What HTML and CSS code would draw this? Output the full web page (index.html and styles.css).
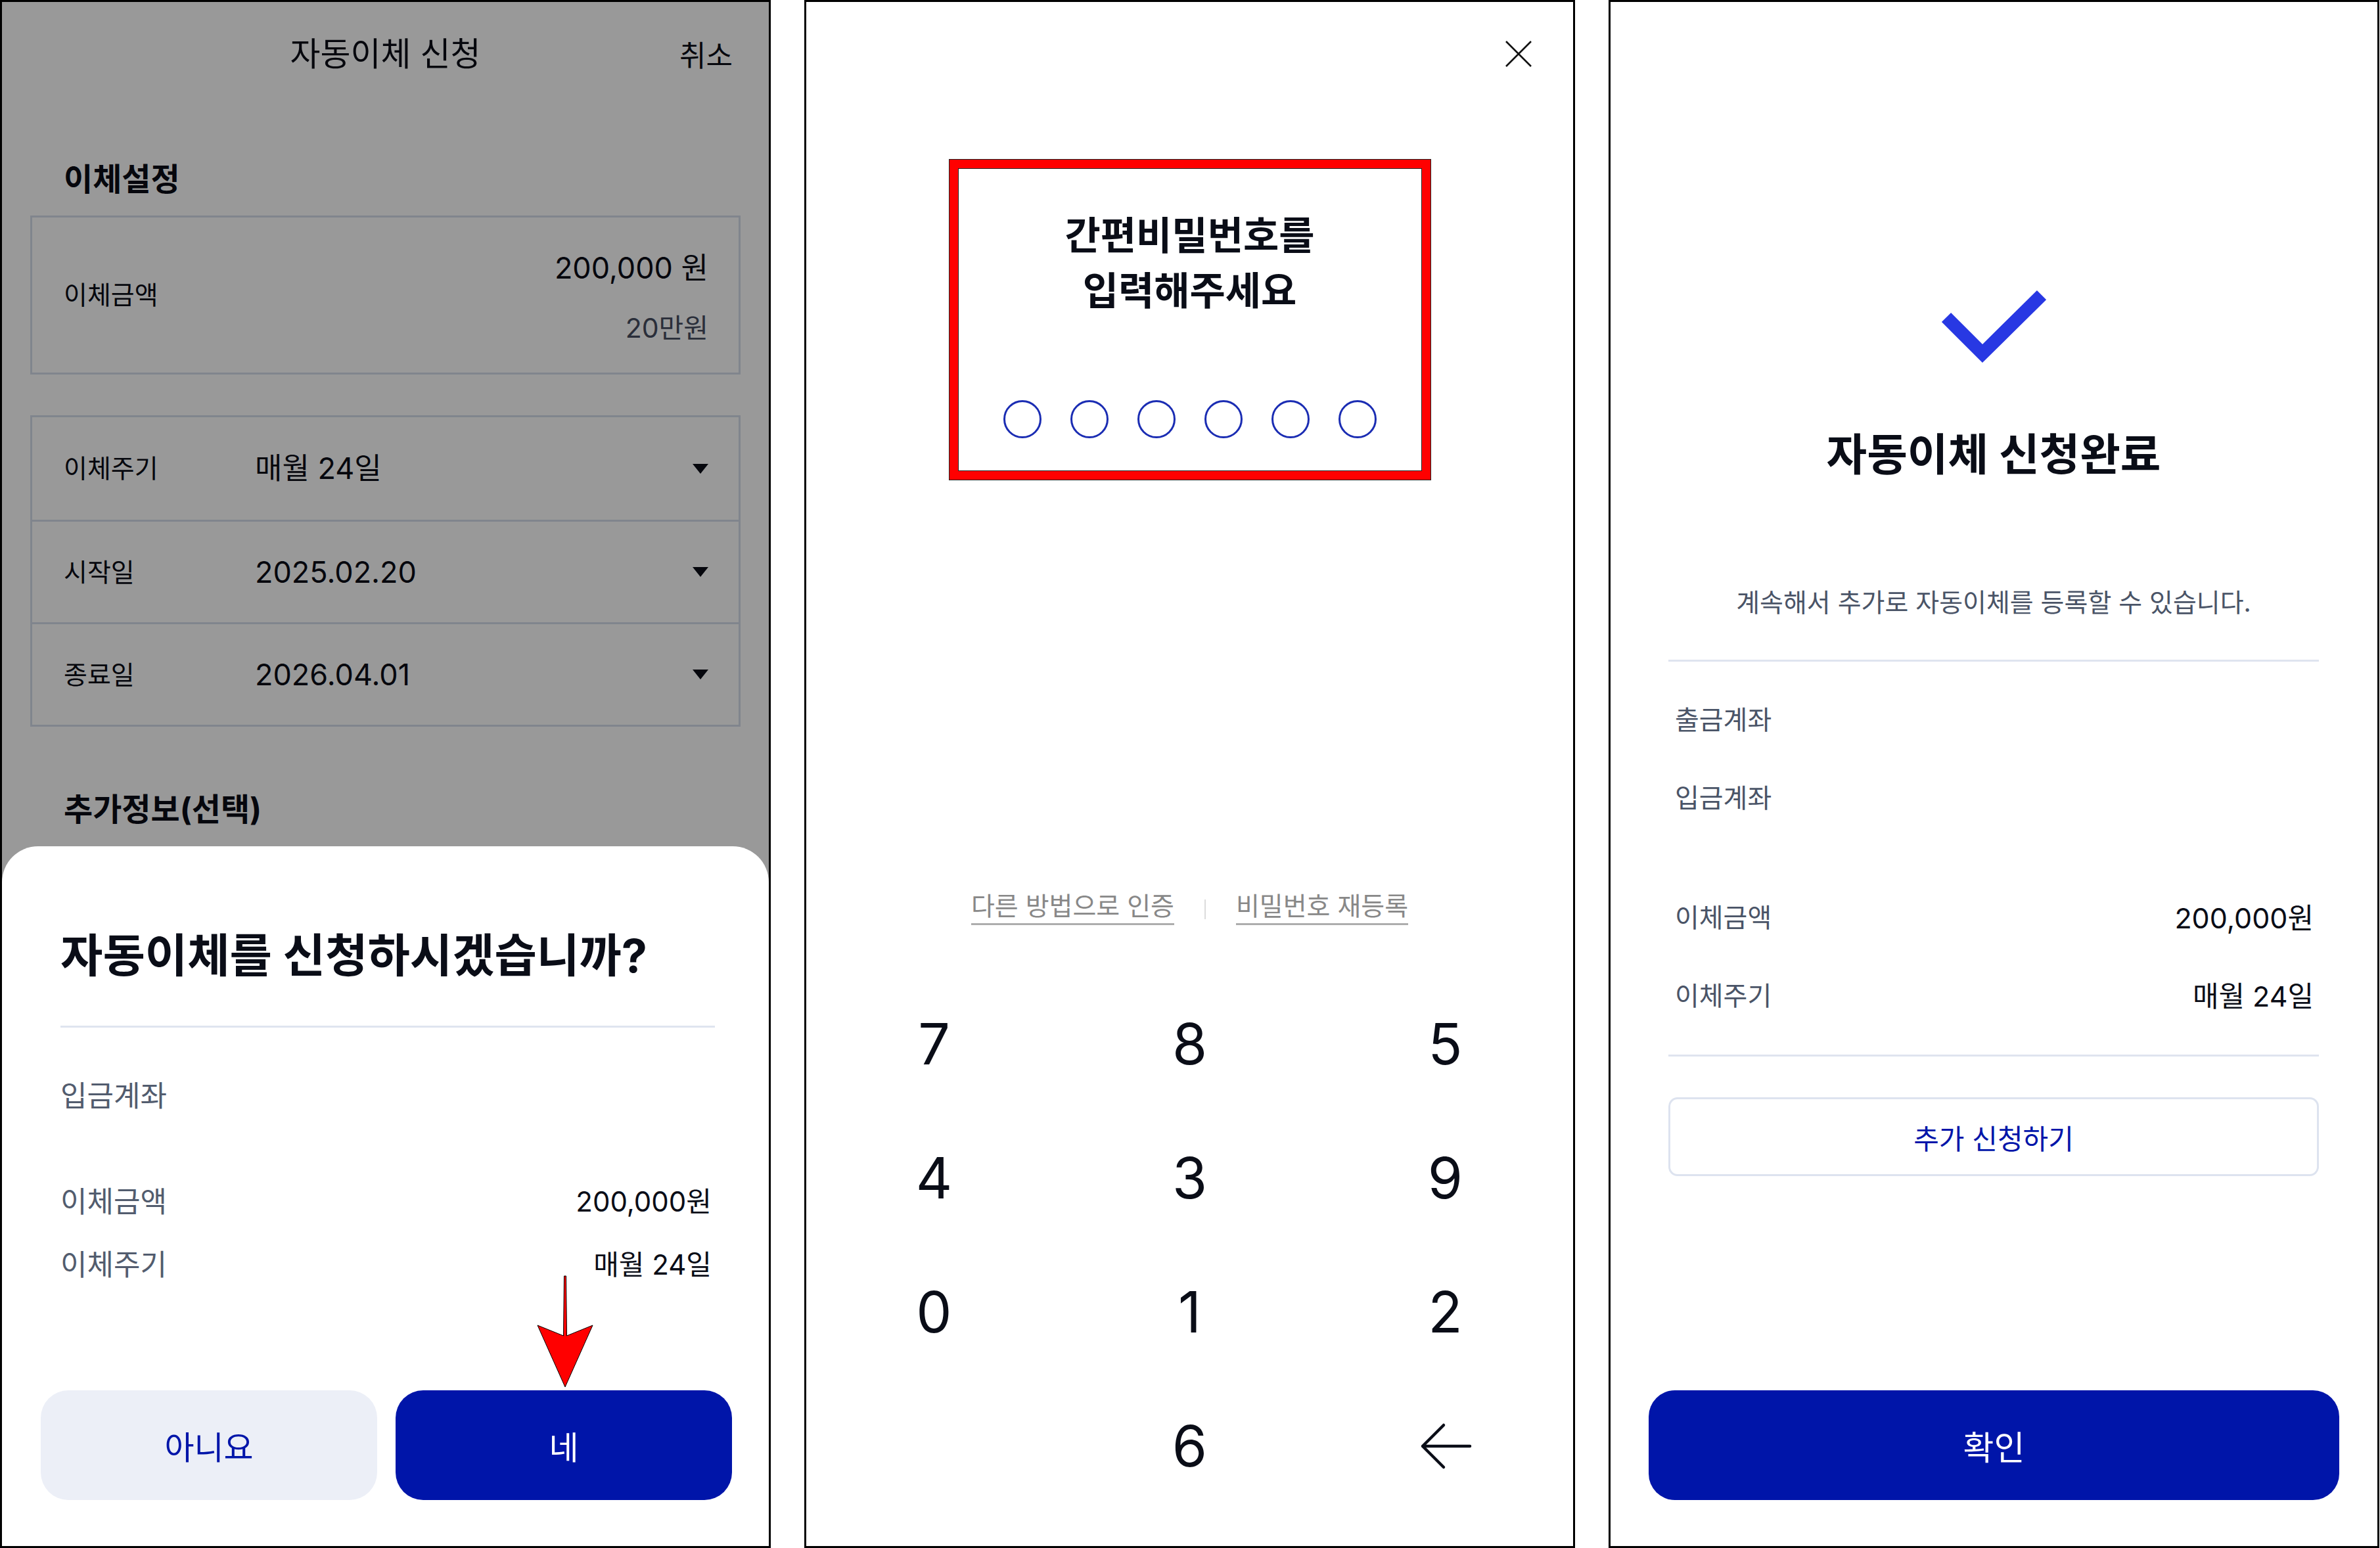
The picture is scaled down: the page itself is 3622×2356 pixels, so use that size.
FILE: index.html
```html
<!DOCTYPE html>
<html lang="ko">
<head>
    <meta charset="UTF-8">
    <meta name="viewport" content="width=device-width, initial-scale=1.0">
    <title>자동이체 신청</title>
    <link rel="stylesheet" href="styles.css">
</head>
<body>
<div class="screens">

    <!-- 1. 신청 화면 + 확인 시트 -->
    <section class="phone">
        <header class="topbar">
            <span></span>
            <h1 class="topbar-title">자동이체 신청</h1>
            <a class="topbar-cancel">취소</a>
        </header>

        <h2 class="section-title">이체설정</h2>
        <div class="field-box amount-box">
            <span class="field-label">이체금액</span>
            <div class="amount">
                <span class="amount-value">200,000 원</span>
                <span class="amount-hint">20만원</span>
            </div>
        </div>

        <div class="field-box select-box">
            <div class="select-row">
                <span class="field-label">이체주기</span>
                <span class="select-value">매월 24일</span>
                <i class="caret"></i>
            </div>
            <div class="select-row">
                <span class="field-label">시작일</span>
                <span class="select-value">2025.02.20</span>
                <i class="caret"></i>
            </div>
            <div class="select-row">
                <span class="field-label">종료일</span>
                <span class="select-value">2026.04.01</span>
                <i class="caret"></i>
            </div>
        </div>

        <h2 class="section-title extra">추가정보(선택)</h2>

        <div class="dim"></div>
        <div class="sheet">
            <h3 class="sheet-title">자동이체를 신청하시겠습니까?</h3>
            <div class="divider"></div>
            <div class="summary">
                <div class="summary-row account"><span class="summary-label">입금계좌</span><span></span></div>
                <div class="summary-row"><span class="summary-label">이체금액</span><span>200,000원</span></div>
                <div class="summary-row"><span class="summary-label">이체주기</span><span>매월 24일</span></div>
            </div>
            <div class="sheet-actions">
                <button class="btn btn-light">아니요</button>
                <button class="btn btn-primary">네</button>
            </div>
        </div>

        <svg class="pointer" width="100" height="185" viewBox="0 0 100 185">
            <path d="M48.5 7 L51.5 7 L52.5 98 L92 82 L50 176 L8 82 L47.5 98 Z" fill="#ff0000" stroke="#000" stroke-width="1"/>
        </svg>
    </section>

    <!-- 2. 간편비밀번호 입력 -->
    <section class="phone">
        <header class="pin-top">
            <svg class="close" width="42" height="42" viewBox="0 0 42 42">
                <path d="M2 2 L40 40 M40 2 L2 40" stroke="#111" stroke-width="2.6" fill="none"/>
            </svg>
        </header>

        <div class="pin-box">
            <h2 class="pin-title">간편비밀번호를<br>입력해주세요</h2>
            <div class="pin-dots">
                <span class="dot"></span>
                <span class="dot"></span>
                <span class="dot"></span>
                <span class="dot"></span>
                <span class="dot"></span>
                <span class="dot"></span>
            </div>
        </div>

        <div class="pin-links">
            <a class="pin-link">다른 방법으로 인증</a>
            <span class="pin-sep"></span>
            <a class="pin-link">비밀번호 재등록</a>
        </div>

        <div class="keypad">
            <span class="key">7</span>
            <span class="key">8</span>
            <span class="key">5</span>
            <span class="key">4</span>
            <span class="key">3</span>
            <span class="key">9</span>
            <span class="key">0</span>
            <span class="key">1</span>
            <span class="key">2</span>
            <span class="key"></span>
            <span class="key">6</span>
            <span class="key">
                <svg width="80" height="72" viewBox="0 0 80 72">
                    <path d="M77 36 H5 M37 4 L5 36 L37 68" stroke="#0a0d17" stroke-width="4.5" fill="none" stroke-linecap="round" stroke-linejoin="round"/>
                </svg>
            </span>
        </div>
    </section>

    <!-- 3. 신청 완료 -->
    <section class="phone done">
        <div class="done-body">
            <svg class="check" width="160" height="120" viewBox="0 0 160 120">
                <polyline points="8,43 63,98 153,9" fill="none" stroke="#2838e3" stroke-width="20" stroke-linejoin="miter"/>
            </svg>
            <h2 class="done-title">자동이체 신청완료</h2>
            <p class="done-desc">계속해서 추가로 자동이체를 등록할 수 있습니다.</p>
            <div class="divider"></div>
            <div class="done-list">
                <div class="done-row"><span class="done-label">출금계좌</span><span></span></div>
                <div class="done-row"><span class="done-label">입금계좌</span><span></span></div>
                <div class="done-row wide"><span class="done-label">이체금액</span><span class="done-value">200,000원</span></div>
                <div class="done-row"><span class="done-label">이체주기</span><span class="done-value">매월 24일</span></div>
            </div>
            <div class="divider bottom"></div>
            <button class="btn btn-outline">추가 신청하기</button>
        </div>
        <button class="btn btn-primary btn-confirm">확인</button>
    </section>

</div>
</body>
</html>
```

FILE: styles.css
```css
* {
    box-sizing: border-box;
}

body {
    margin: 0;
    background: #fff;
    font-family: Inter, "Noto Sans CJK KR", sans-serif;
    color: #0a0d17;
}

.screens {
    display: flex;
    gap: 51px;
    width: 3622px;
    height: 2356px;
}

.phone {
    position: relative;
    display: flex;
    flex-direction: column;
    width: 1173px;
    height: 2356px;
    border: 3px solid #000;
    background: #fff;
    overflow: hidden;
}

/* ---------- screen 1 ---------- */

.topbar {
    display: grid;
    grid-template-columns: 1fr auto 1fr;
    align-items: center;
    height: 158px;
}

.topbar-title {
    margin: 0;
    font-size: 50px;
    font-weight: 400;
    line-height: 60px;
}

.topbar-cancel {
    justify-self: end;
    margin-right: 55px;
    font-size: 44px;
}

.section-title {
    margin: 82px 0 0 94px;
    font-size: 48px;
    font-weight: 700;
    line-height: 60px;
}

.section-title.extra {
    margin-top: 96px;
}

.field-box {
    margin: 25px 43px 0;
    border: 3px solid #d5deeb;
}

.field-label {
    font-size: 39px;
    line-height: 50px;
}

.amount-box {
    display: flex;
    align-items: center;
    justify-content: space-between;
    height: 242px;
    padding: 0 46px 0 48px;
}

.amount {
    display: flex;
    flex-direction: column;
    align-items: flex-end;
    gap: 31px;
    padding-top: 8px;
}

.amount-value {
    font-size: 45px;
    line-height: 60px;
}

.amount-hint {
    font-size: 41px;
    line-height: 60px;
    color: #464e61;
}

.select-box {
    margin-top: 62px;
}

.select-row {
    display: flex;
    align-items: center;
    height: 156px;
    padding: 0 46px 0 48px;
}

.select-row + .select-row {
    border-top: 3px solid #d5deeb;
}

.select-row .field-label {
    width: 291px;
}

.select-value {
    flex: 1;
    font-size: 45px;
    line-height: 60px;
}

.caret {
    width: 0;
    height: 0;
    border-left: 12px solid transparent;
    border-right: 12px solid transparent;
    border-top: 15px solid #0a0d17;
}

.dim {
    position: absolute;
    inset: 0;
    background: rgba(0, 0, 0, 0.4);
}

.sheet {
    position: absolute;
    left: 0;
    right: 0;
    top: 1285px;
    bottom: 0;
    display: flex;
    flex-direction: column;
    padding: 122px 0 70px;
    background: #fff;
    border-radius: 55px 55px 0 0;
}

.sheet-title {
    margin: 0 82px 0 89px;
    font-size: 70px;
    font-weight: 700;
    line-height: 90px;
    white-space: nowrap;
}

.divider {
    height: 3px;
    background: #dfe4ef;
}

.sheet .divider {
    margin: 61px 82px 0 89px;
}

.summary {
    display: flex;
    flex-direction: column;
    margin: 74px 87px 0 89px;
}

.summary-row {
    display: flex;
    justify-content: space-between;
    font-size: 42px;
    line-height: 60px;
}

.summary-row + .summary-row {
    margin-top: 36px;
}

.summary-row.account {
    margin-bottom: 65px;
}

.summary-label {
    font-size: 44px;
    color: #525c6e;
}

.sheet-actions {
    display: flex;
    gap: 28px;
    margin-top: auto;
    padding: 0 56px 0 59px;
}

.btn {
    flex: 1;
    height: 167px;
    border: 0;
    border-radius: 42px;
    font: inherit;
    font-size: 49px;
    cursor: pointer;
}

.btn-light {
    background: #eceff7;
    color: #0015a9;
}

.btn-primary {
    background: #0015a9;
    color: #fff;
}

.pointer {
    position: absolute;
    left: 807px;
    top: 1932px;
}

/* ---------- screen 2 ---------- */

.pin-top {
    display: flex;
    justify-content: flex-end;
    align-items: center;
    height: 158px;
    padding-right: 62px;
}

.pin-box {
    align-self: center;
    display: flex;
    flex-direction: column;
    align-items: center;
    width: 732px;
    height: 487px;
    margin-top: 82px;
    padding-top: 61px;
    border: 13px solid #ff0000;
    box-shadow: 0 0 0 1px #222, inset 0 0 0 1px #222;
}

.pin-title {
    margin: 0;
    font-size: 59px;
    font-weight: 700;
    line-height: 84px;
    text-align: center;
}

.pin-dots {
    display: flex;
    gap: 44px;
    margin-top: 124px;
}

.dot {
    width: 58px;
    height: 58px;
    border: 3px solid #1b2db3;
    border-radius: 50%;
}

.pin-links {
    display: flex;
    justify-content: center;
    align-items: center;
    gap: 46px;
    margin-top: 629px;
}

.pin-link {
    padding-bottom: 6px;
    border-bottom: 3px solid #adadad;
    font-size: 39px;
    line-height: 40px;
    color: #888;
}

.pin-sep {
    width: 2px;
    height: 30px;
    background: #dcdcdc;
}

.keypad {
    display: grid;
    grid-template-columns: repeat(3, 1fr);
    grid-auto-rows: 204px;
    margin-top: 79px;
}

.key {
    display: flex;
    align-items: center;
    justify-content: center;
    font-size: 86px;
}

/* ---------- screen 3 ---------- */

.done {
    padding: 0 58px 70px 58px;
}

.done-body {
    display: flex;
    flex-direction: column;
    padding: 0 31px 0 30px;
}

.check {
    align-self: center;
    margin-top: 437px;
}

.done-title {
    margin: 92px 0 0;
    font-size: 67px;
    font-weight: 700;
    line-height: 80px;
    text-align: center;
}

.done-desc {
    margin: 160px 0 0;
    font-size: 39px;
    line-height: 50px;
    text-align: center;
    color: #4a5467;
}

.done-body .divider {
    margin-top: 62px;
}

.done-body .divider.bottom {
    margin-top: 67px;
}

.done-list {
    margin-top: 61px;
    padding: 0 8px 0 10px;
}

.done-row {
    display: flex;
    justify-content: space-between;
    align-items: center;
    height: 50px;
}

.done-row + .done-row {
    margin-top: 69px;
}

.done-row.wide {
    margin-top: 132px;
}

.done-label {
    font-size: 40px;
    color: #4a5467;
}

.done-value {
    font-size: 43px;
}

.btn-outline {
    flex: none;
    height: 120px;
    margin-top: 62px;
    border: 3px solid #dde3ef;
    border-radius: 14px;
    background: #fff;
    color: #0015a9;
    font-size: 42px;
}

.btn-confirm {
    flex: none;
    margin-top: auto;
    border-radius: 40px;
    font-size: 51px;
}
```
